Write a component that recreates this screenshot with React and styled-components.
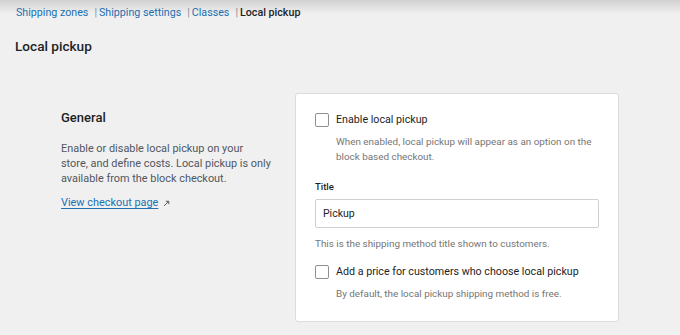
import React, { useState } from 'react'
import styled, { createGlobalStyle } from 'styled-components'

const GlobalStyle = createGlobalStyle`
  html, body {
    margin: 0;
    padding: 0;
    background: #f0f0f1;
  }
  body {
    font-family: Roboto, 'Noto Sans', sans-serif;
    color: #1e1e1e;
  }
  * {
    box-sizing: border-box;
  }
`

const Page = styled.div`
  position: relative;
  width: 680px;
  height: 335px;
  overflow: hidden;
  background: #f0f0f1;
  &::before {
    content: '';
    position: absolute;
    left: 0;
    right: 0;
    top: 0;
    height: 14px;
    background: linear-gradient(rgba(0, 0, 0, 0.13), rgba(0, 0, 0, 0));
    pointer-events: none;
  }
`

const Header = styled.div`
  padding: 4px 16px 0 15px;
`

const Breadcrumbs = styled.nav`
  display: flex;
  align-items: baseline;
  font-size: 10.7px;
  line-height: 18px;
`

const Crumb = styled.a`
  color: ${({ current }) => (current ? '#1d2327' : '#2271b1')};
  font-weight: ${({ current }) => (current ? 500 : 400)};
  text-decoration: none;
  padding: 0 1px;
`

const Sep = styled.span`
  color: #8c8f94;
  margin: 0 1px 0 5px;
`

const PageTitle = styled.h1`
  margin: 14px 0 0;
  font-size: 13.6px;
  font-weight: 500;
  color: #1d2327;
  line-height: 20px;
`

const Section = styled.div`
  display: flex;
  gap: 24px;
  padding: 37px 61px 0;
`

const Intro = styled.div`
  width: 210px;
  flex-shrink: 0;
  padding-top: 16px;
`

const IntroTitle = styled.h2`
  margin: 0;
  font-size: 13px;
  font-weight: 500;
  color: #1e1e1e;
  line-height: 18px;
`

const IntroText = styled.p`
  margin: 13.5px 0 0;
  font-size: 10.9px;
  line-height: 15px;
  color: #50575e;
`

const ExtLink = styled.a`
  display: inline-flex;
  align-items: center;
  gap: 5px;
  margin-top: 9.5px;
  font-size: 10.9px;
  line-height: 16px;
  color: #2271b1;
  text-decoration: underline;
  text-underline-offset: 2px;
`

const Card = styled.div`
  flex: 1;
  background: #fff;
  border: 1px solid #dcdcde;
  border-radius: 3px;
  padding: 18px 19px 20px;
`

const CheckRow = styled.label`
  display: flex;
  align-items: center;
  gap: 7px;
  margin-top: ${({ top }) => top || 0}px;
  font-size: 10.7px;
  line-height: 16px;
  color: #1e1e1e;
  cursor: pointer;
`

const Box = styled.span`
  width: 14px;
  height: 14px;
  border: 1px solid #8c8f94;
  border-radius: 2px;
  background: ${({ checked }) => (checked ? '#2271b1' : '#fff')};
  flex-shrink: 0;
`

const Help = styled.p`
  margin: ${({ indent }) => (indent ? '5.5px 0 0 21px' : '7.5px 0 0')};
  font-size: 9.9px;
  line-height: 15px;
  color: #757575;
`

const FieldLabel = styled.div`
  margin-top: 16px;
  font-size: 9.5px;
  font-weight: 500;
  color: #1e1e1e;
  line-height: 14px;
`

const Input = styled.input`
  display: block;
  width: 100%;
  height: 29px;
  margin-top: 5.5px;
  padding: 0 7px;
  border: 1px solid #cfcfcf;
  border-radius: 2px;
  font-family: inherit;
  font-size: 10.5px;
  color: #1e1e1e;
  outline: none;
`

const ArrowIcon = () => (
  <svg width="7" height="7" viewBox="0 0 10 10" fill="none" stroke="#50575e" strokeWidth="1.4">
    <path d="M1.5 8.5L8 2M4 1.8h4.2V6" />
  </svg>
)

const App = () => {
  const [enabled, setEnabled] = useState(false)
  const [priced, setPriced] = useState(false)
  const [title, setTitle] = useState('Pickup')

  return (
    <Page>
      <GlobalStyle />
      <Header>
        <Breadcrumbs>
          <Crumb href="#">Shipping zones</Crumb>
          <Sep>|</Sep>
          <Crumb href="#">Shipping settings</Crumb>
          <Sep>|</Sep>
          <Crumb href="#">Classes</Crumb>
          <Sep>|</Sep>
          <Crumb current>Local pickup</Crumb>
        </Breadcrumbs>
        <PageTitle>Local pickup</PageTitle>
      </Header>

      <Section>
        <Intro>
          <IntroTitle>General</IntroTitle>
          <IntroText>
            Enable or disable local pickup on your store, and define costs. Local pickup is only
            available from the block checkout.
          </IntroText>
          <ExtLink href="#">
            View checkout page <ArrowIcon />
          </ExtLink>
        </Intro>

        <Card>
          <CheckRow onClick={() => setEnabled(!enabled)}>
            <Box checked={enabled} />
            Enable local pickup
          </CheckRow>
          <Help indent>
            When enabled, local pickup will appear as an option on the block based checkout.
          </Help>

          <FieldLabel>Title</FieldLabel>
          <Input value={title} onChange={(e) => setTitle(e.target.value)} />
          <Help>This is the shipping method title shown to customers.</Help>

          <CheckRow top={13.5} onClick={() => setPriced(!priced)}>
            <Box checked={priced} />
            Add a price for customers who choose local pickup
          </CheckRow>
          <Help indent>By default, the local pickup shipping method is free.</Help>
        </Card>
      </Section>
    </Page>
  )
}

export default App
